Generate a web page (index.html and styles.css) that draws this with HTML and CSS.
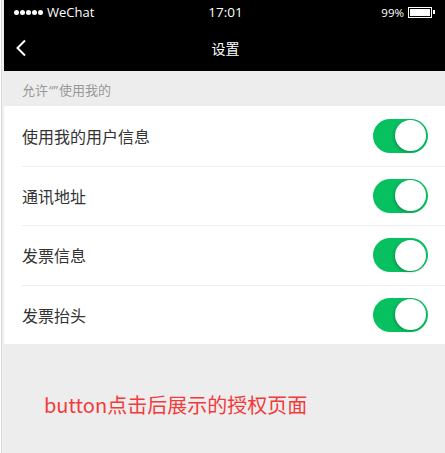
FILE: index.html
```html
<!DOCTYPE html>
<html lang="zh">
<head>
<meta charset="utf-8">
<title>设置</title>
<link rel="stylesheet" href="styles.css">
</head>
<body>
<div class="frame">
  <div class="edge"></div>
  <div class="phone">
    <div class="statusbar">
      <div class="sb-left"><span class="dots"><i></i><i></i><i></i><i></i><i></i></span><span>WeChat</span></div>
      <div class="sb-time">17:01</div>
      <div class="sb-right"><span>99%</span><span class="battery"><span class="level"></span></span></div>
    </div>
    <div class="navbar">
      <svg class="back" width="12" height="18" viewBox="0 0 12 18"><path d="M10 1.5 L2.5 9 L10 16.5" fill="none" stroke="#fff" stroke-width="2"/></svg>
      <div class="title">设置</div>
    </div>
    <div class="section-head">允许<span class="q">“”</span>使用我的</div>
    <div class="list">
      <div class="row"><span class="label">使用我的用户信息</span><span class="switch"><span class="knob"></span></span></div>
      <div class="row"><span class="label">通讯地址</span><span class="switch"><span class="knob"></span></span></div>
      <div class="row"><span class="label">发票信息</span><span class="switch"><span class="knob"></span></span></div>
      <div class="row"><span class="label">发票抬头</span><span class="switch"><span class="knob"></span></span></div>
    </div>
    <div class="footer">
      <p class="note">button点击后展示的授权页面</p>
    </div>
  </div>
</div>
</body>
</html>
```
FILE: styles.css
```css
html, body {
  margin: 0;
  padding: 0;
  height: 100%;
}
body {
  font-family: "Noto Sans CJK SC", "Noto Sans", sans-serif;
  background: #ededed;
}
.frame {
  display: flex;
  height: 453px;
  overflow: hidden;
}
.edge {
  width: 4px;
  flex: none;
  background: linear-gradient(to right, #ffffff 0 1px, #d9d9d9 1px 2px, #eeeeee 2px 4px);
}
.phone {
  flex: 1;
  display: flex;
  flex-direction: column;
  background: #ededed;
}
.statusbar {
  background: #000;
  color: #fff;
  height: 24px;
  display: flex;
  align-items: center;
  justify-content: space-between;
  padding: 0 10px 0 10px;
  font-family: "Open Sans", "Liberation Sans", sans-serif;
  font-size: 13px;
  position: relative;
}
.sb-left {
  display: flex;
  align-items: center;
  gap: 4px;
}
.dots {
  display: flex;
  gap: 1px;
}
.dots i {
  width: 5px;
  height: 5px;
  border-radius: 50%;
  background: #fff;
  display: block;
}
.sb-time {
  position: absolute;
  left: 0;
  right: 0;
  text-align: center;
  font-size: 13.5px;
  padding-left: 2px;
  pointer-events: none;
}
.sb-right {
  display: flex;
  align-items: center;
  gap: 4px;
  font-size: 11.5px;
}
.battery {
  width: 20px;
  height: 7px;
  border: 1px solid #fff;
  padding: 1px;
  position: relative;
  display: block;
  margin-right: 3px;
}
.battery::after {
  content: "";
  position: absolute;
  right: -4px;
  top: 2px;
  width: 2px;
  height: 4px;
  background: #fff;
}
.level {
  display: block;
  width: 100%;
  height: 100%;
  background: #fff;
}
.navbar {
  background: #000;
  color: #fff;
  height: 47px;
  display: flex;
  align-items: center;
  justify-content: center;
  position: relative;
}
.back {
  position: absolute;
  left: 11px;
  top: 15px;
}
.title {
  font-size: 14px;
  padding-left: 2px;
}
.section-head {
  height: 35px;
  display: flex;
  align-items: center;
  padding: 2px 0 0 18px;
  box-sizing: border-box;
  color: #999;
  font-size: 13px;
}
.q {
  font-family: "Open Sans", "Liberation Sans", sans-serif;
  margin: 0 1px;
}
.list {
  background: #fff;
}
.row {
  height: 59.5px;
  margin-left: 18px;
  padding-right: 17px;
  display: flex;
  align-items: center;
  justify-content: space-between;
  border-top: 1px solid #efefef;
  box-sizing: border-box;
}
.row:first-child {
  border-top: none;
}
.label {
  color: #333;
  font-size: 16px;
}
.switch {
  width: 55px;
  height: 34px;
  border-radius: 17px;
  background: #07c160;
  position: relative;
  display: block;
}
.knob {
  position: absolute;
  right: 2px;
  top: 1.5px;
  width: 31px;
  height: 31px;
  border-radius: 50%;
  background: #fff;
  box-shadow: -1px 1px 3px rgba(0, 0, 0, 0.25);
}
.footer {
  flex: 1;
  padding-top: 46px;
}
.note {
  margin: 0 0 0 40px;
  color: #f23a3a;
  font-size: 20px;
}
```
